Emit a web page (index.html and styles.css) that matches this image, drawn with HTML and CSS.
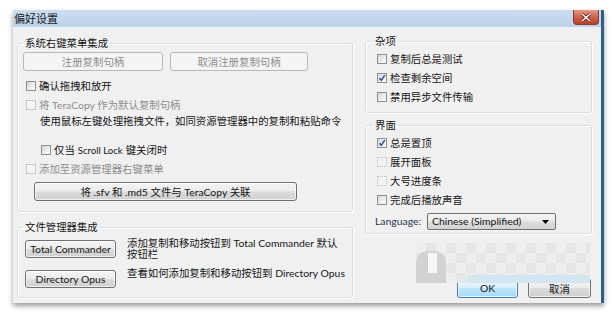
FILE: index.html
```html
<!DOCTYPE html>
<html lang="zh-CN">
<head>
    <meta charset="UTF-8">
    <title>偏好设置</title>
    <link rel="stylesheet" href="styles.css">
</head>
<body>
    <div class="window">
        <div class="titlebar">
            <span class="title">偏好设置</span>
            <span class="close-btn">
                <svg width="12" height="9" viewBox="0 0 12 9"><path d="M2 1 L10 8 M10 1 L2 8" stroke="#5a1a10" stroke-width="3"/><path d="M2 1 L10 8 M10 1 L2 8" stroke="#fff" stroke-width="1.6"/></svg>
            </span>
        </div>

        <div class="content">
            <div class="col-left">
                <fieldset class="group group-shell">
                    <legend>系统右键菜单集成</legend>
                    <div class="btn-row">
                        <button class="btn btn-disabled btn-reg">注册复制句柄</button>
                        <button class="btn btn-disabled btn-unreg">取消注册复制句柄</button>
                    </div>
                    <label class="check check-first"><span class="box"></span>确认拖拽和放开</label>
                    <label class="check disabled"><span class="box"></span>将 TeraCopy 作为默认复制句柄</label>
                    <div class="desc">使用鼠标左键处理拖拽文件，如同资源管理器中的复制和粘贴命令</div>
                    <label class="check check-indent"><span class="box"></span>仅当 <span class="small-latin">Scroll Lock</span> 键关闭时</label>
                    <label class="check disabled"><span class="box"></span>添加至资源管理器右键菜单</label>
                    <button class="btn btn-assoc">将 .sfv 和 .md5 文件与 TeraCopy 关联</button>
                </fieldset>

                <fieldset class="group group-fm">
                    <legend>文件管理器集成</legend>
                    <div class="fm-row">
                        <button class="btn btn-fm">Total Commander</button>
                        <div class="fm-text">添加复制和移动按钮到 Total Commander 默认按钮栏</div>
                    </div>
                    <div class="fm-row fm-row-second">
                        <button class="btn btn-fm">Directory Opus</button>
                        <div class="fm-text">查看如何添加复制和移动按钮到 Directory Opus</div>
                    </div>
                </fieldset>
            </div>

            <div class="col-right">
                <fieldset class="group group-misc">
                    <legend>杂项</legend>
                    <label class="check"><span class="box"></span>复制后总是测试</label>
                    <label class="check"><span class="box checked"><svg width="8" height="8" viewBox="0 0 8 8"><path d="M1.5 4.2 L3.3 6.3 L6.8 1.2" fill="none" stroke="#2d4a9c" stroke-width="1.5"/></svg></span>检查剩余空间</label>
                    <label class="check"><span class="box"></span>禁用异步文件传输</label>
                </fieldset>

                <fieldset class="group group-ui">
                    <legend>界面</legend>
                    <label class="check"><span class="box checked"><svg width="8" height="8" viewBox="0 0 8 8"><path d="M1.5 4.2 L3.3 6.3 L6.8 1.2" fill="none" stroke="#2d4a9c" stroke-width="1.5"/></svg></span>总是置顶</label>
                    <label class="check"><span class="box faint"></span>展开面板</label>
                    <label class="check"><span class="box faint"></span>大号进度条</label>
                    <label class="check"><span class="box"></span>完成后播放声音</label>
                    <div class="lang-row">
                        <span class="lang-label">Language:</span>
                        <div class="select">
                            <span>Chinese (Simplified)</span>
                            <svg width="7" height="4" viewBox="0 0 7 4"><path d="M0 0 L7 0 L3.5 4 Z" fill="#000"/></svg>
                        </div>
                    </div>
                </fieldset>

                <div class="dialog-buttons">
                    <button class="btn btn-ok">OK</button>
                    <button class="btn btn-cancel">取消</button>
                </div>
            </div>
        </div>

        <!-- watermark (pixelated) -->
        <div class="mosaic">
            <div class="mosaic-logo"></div>
            <div class="mosaic-hole"></div>
            <div class="mosaic-strip"></div>
        </div>
    </div>
</body>
</html>
```

FILE: styles.css
```css
* {
    margin: 0;
    padding: 0;
    box-sizing: border-box;
}

body {
    background: #ffffff;
    font-family: 'Lato', 'Noto Sans CJK SC', sans-serif;
    font-size: 10.4px;
    line-height: 13px;
    color: #151515;
    width: 614px;
    height: 315px;
    overflow: hidden;
}

.window {
    position: relative;
    margin: 10px 0 0 13px;
    width: 591px;
    height: 293px;
    background: #f0f0f0;
    border-right: 3px solid #2f5f8c;
    box-shadow: 0 3px 5px rgba(0, 0, 0, 0.4);
}

.titlebar {
    height: 17px;
    background: linear-gradient(180deg, #cadcf0 0%, #bcd2ea 100%);
    display: flex;
    align-items: center;
    justify-content: space-between;
    padding-right: 2px;
}

.title {
    font-size: 11px;
    color: #1a1a1a;
    padding-left: 1px;
}

.close-btn {
    align-self: flex-start;
    width: 26px;
    height: 15px;
    display: flex;
    align-items: center;
    justify-content: center;
    background: linear-gradient(180deg, #e49a88 0%, #d0634a 50%, #bd3f25 100%);
    border: 1px solid #8b3b2c;
    border-top: none;
    border-radius: 0 0 4px 4px;
}

.content {
    display: flex;
    gap: 12px;
    padding: 8px 0 0 4px;
}

.col-left {
    width: 336px;
    margin-top: 2px;
}

.col-right {
    width: 227px;
}

.group {
    border: 1px solid #d5dfe5;
    border-radius: 3px;
    box-shadow: inset 1px 1px 0 #ffffff, 1px 1px 0 #ffffff;
    padding: 0 6px;
}

.group legend {
    line-height: 13px;
    padding: 0 2px;
    margin-left: -1px;
}

/* left column */
.group-shell {
    padding-top: 2px;
    padding-bottom: 10px;
}

.btn-row {
    display: flex;
    gap: 7px;
    margin-left: -1px;
}

.btn {
    font-family: inherit;
    font-size: 10.4px;
    color: #151515;
    height: 19px;
    border: 1px solid #707070;
    border-radius: 3px;
    background: linear-gradient(180deg, #f4f4f4 0%, #ebebeb 48%, #dcdcdc 52%, #cfcfcf 100%);
    box-shadow: inset 0 0 0 1px rgba(255, 255, 255, 0.7);
}

.btn-disabled {
    color: #8d8d8d;
    border-color: #b5b9bb;
    background: #f4f4f4;
    box-shadow: none;
}

.btn-reg {
    width: 140px;
}

.btn-unreg {
    width: 138px;
}

.check {
    display: flex;
    align-items: center;
    gap: 3px;
    height: 14px;
    margin: 5px 0 0 2px;
    white-space: nowrap;
}

.check-first {
    margin-top: 8px;
}

.check-indent {
    margin-top: 15px;
    margin-left: 17px;
}

.check.disabled {
    color: #8d8d8d;
}

.box {
    width: 10px;
    height: 10px;
    border: 1px solid #8e8f8f;
    background: linear-gradient(135deg, #d6d6d6 0%, #f6f6f6 80%);
    display: flex;
    align-items: center;
    justify-content: center;
    flex-shrink: 0;
}

.check.disabled .box {
    border-color: #c9c9c9;
    background: #f5f5f5;
}

.box.faint {
    border: 1px dotted #bdbdbd;
    background: #f3f3f3;
}

.small-latin {
    font-size: 9.6px;
}

.desc {
    margin: 2px 0 0 16px;
    height: 14px;
    line-height: 14px;
    white-space: nowrap;
}

.btn-assoc {
    display: block;
    width: 263px;
    margin: 6px 0 0 10px;
}

.group-fm {
    margin-top: 9px;
    padding-top: 6px;
    padding-bottom: 9px;
}

.fm-row {
    display: flex;
    align-items: flex-start;
    gap: 11px;
    margin-left: 1px;
}

.fm-row-second {
    margin-top: 11px;
}

.btn-fm {
    width: 91px;
    height: 18px;
    flex-shrink: 0;
}

.fm-text {
    width: 218px;
    line-height: 10.5px;
    margin-top: -2px;
}

/* right column */
.group-misc {
    padding-top: 0;
    padding-bottom: 8px;
}

.group-misc legend,
.group-ui legend {
    margin-left: 1px;
}

.group-misc .check,
.group-ui .check {
    margin-left: 5px;
}

.group-misc .check:first-of-type,
.group-ui .check:first-of-type {
    margin-top: 4px;
}

.group-ui {
    margin-top: 6px;
    padding-bottom: 3px;
}

.lang-row {
    display: flex;
    align-items: center;
    margin: 6px 0 0 3px;
}

.lang-label {
    width: 52px;
    color: #2a3550;
}

.select {
    width: 129px;
    height: 17px;
    display: flex;
    align-items: center;
    justify-content: space-between;
    padding: 0 6px 0 4px;
    border: 1px solid #707070;
    border-radius: 2px;
    background: linear-gradient(180deg, #f4f4f4 0%, #ebebeb 48%, #dddddd 52%, #d3d3d3 100%);
}

.dialog-buttons {
    display: flex;
    justify-content: flex-end;
    gap: 10px;
    margin-top: 44px;
    padding-right: 1px;
}

.btn-ok {
    width: 61px;
    height: 20px;
    border-color: #3c7fb1;
    background: linear-gradient(180deg, #eaf6fd 0%, #d9f0fc 48%, #bee6fd 52%, #a7d9f5 100%);
}

.btn-cancel {
    width: 63px;
    height: 20px;
}

/* pixelated watermark over the dialog */
.mosaic {
    position: absolute;
    left: 403px;
    top: 233px;
    width: 174px;
    height: 40px;
    background: repeating-conic-gradient(#e6e6e6 0 25%, #eeeeee 0 50%) 0 0 / 20px 20px;
}

.mosaic-logo {
    position: absolute;
    left: 0;
    top: 8px;
    width: 30px;
    height: 32px;
    border-radius: 12px 12px 0 0;
    background: #d2d2d2;
}

.mosaic-hole {
    position: absolute;
    left: 12px;
    top: 10px;
    width: 9px;
    height: 20px;
    background: #f6f6f6;
}

.mosaic-strip {
    position: absolute;
    left: 51px;
    right: 0;
    bottom: 0;
    height: 8px;
    background: #d3e5ef;
}
```
